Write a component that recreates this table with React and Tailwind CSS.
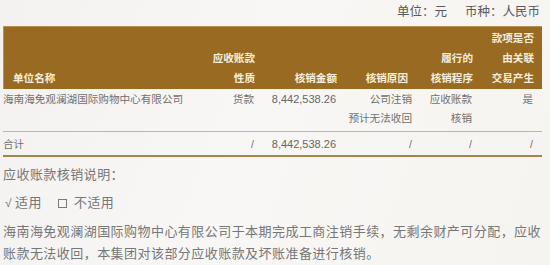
export default function App() {
  const cols = 'grid grid-cols-[197px_54px_82px_76px_60px_61px] pr-[9px]';

  return (
    <div className="w-[550px] h-[265px] overflow-hidden bg-[linear-gradient(110deg,#f3f2f0_0%,#f8f7f5_45%,#f6f4f0_100%)] font-['Liberation_Sans','Noto_Sans_CJK_SC',sans-serif] text-[#707070]">
      <div className="pt-[3px] pr-[10px] flex justify-end text-[12.5px] leading-[18px] text-[#5a5a5a]">
        <span>单位：元</span>
        <span className="ml-[18px]">币种：人民币</span>
      </div>

      <div className="ml-[3px] w-[539px] mt-[5px]">
        <div className={`${cols} h-[63px] items-end bg-[#996b22] border-t border-l border-[#b89150] pb-[1px] text-[10.6px] leading-[20px] font-bold text-[#f6eedc]`}>
          <div className="pl-[9px]">单位名称</div>
          <div className="text-right">应收账款<br />性质</div>
          <div className="text-right">核销金额</div>
          <div className="text-right pr-[5px]">核销原因</div>
          <div className="text-right">履行的<br />核销程序</div>
          <div className="text-right">款项是否<br />由关联<br />交易产生</div>
        </div>

        <div className={`${cols} pt-[1px] pb-[3px] text-[10.6px] leading-[19px] border-b-[1.5px] border-[#cdb587]`}>
          <div className="whitespace-nowrap">海南海免观澜湖国际购物中心有限公司</div>
          <div className="text-right">货款</div>
          <div className="text-right text-[11px] text-[#666]">8,442,538.26</div>
          <div className="text-right">公司注销<br />预计无法收回</div>
          <div className="text-right">应收账款<br />核销</div>
          <div className="text-right">是</div>
        </div>

        <div className={`${cols} pt-[3px] h-[25px] text-[10.6px] leading-[19px] border-b-2 border-[#a8854a]`}>
          <div>合计</div>
          <div className="text-right">/</div>
          <div className="text-right text-[11px] text-[#666]">8,442,538.26</div>
          <div className="text-right">/</div>
          <div className="text-right">/</div>
          <div className="text-right">/</div>
        </div>
      </div>

      <div className="pl-[3px] mt-[7px] text-[13px] leading-[22px] tracking-[0.45px] text-[#777]">
        <div>应收账款核销说明：</div>
        <div className="mt-[6px] flex items-center">
          <span className="text-[12px] ml-[2px]">√</span>
          <span className="ml-[3px]">适用</span>
          <span className="ml-[16px] inline-block w-[9px] h-[9px] border border-[#7a7a7a]"></span>
          <span className="ml-[7px]">不适用</span>
        </div>
        <div className="mt-[7px] whitespace-nowrap">
          海南海免观澜湖国际购物中心有限公司于本期完成工商注销手续，无剩余财产可分配，应收
          <br />
          账款无法收回，本集团对该部分应收账款及坏账准备进行核销。
        </div>
      </div>
    </div>
  );
}
